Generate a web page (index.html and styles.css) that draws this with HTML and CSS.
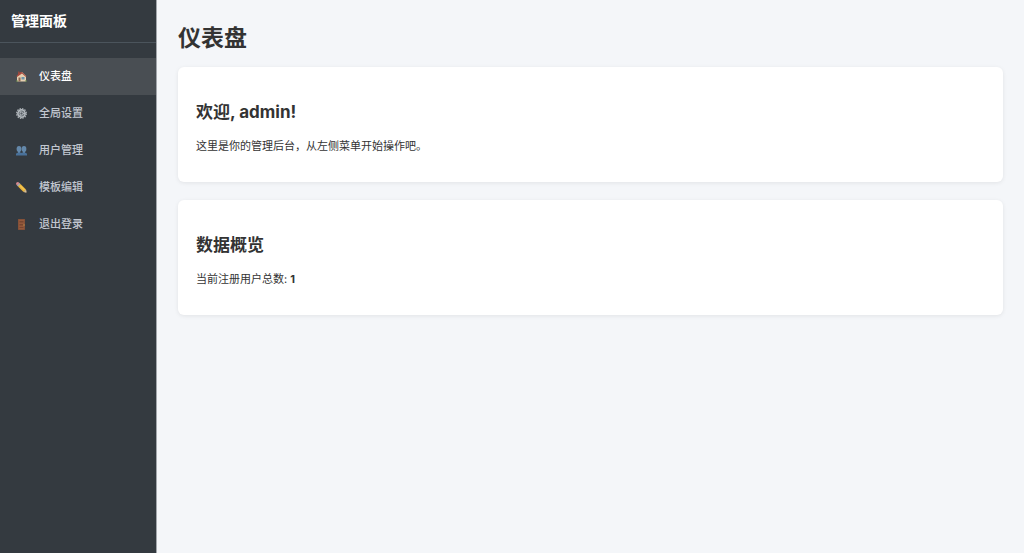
FILE: index.html
```html
<!DOCTYPE html>
<html lang="zh-CN">
<head>
    <meta charset="UTF-8">
    <meta name="viewport" content="width=device-width, initial-scale=1.0">
    <title>管理面板</title>
    <link rel="stylesheet" href="styles.css">
</head>
<body>

    <!-- 侧边栏 -->
    <aside class="sidebar">
        <div class="sidebar-header">管理面板</div>
        <nav>
            <ul class="menu">
                <li>
                    <a href="#" class="active">
                        <svg class="icon" viewBox="0 0 22 22" aria-hidden="true">
                            <path d="M4 1h3v7H4z" fill="#94493e"/>
                            <path d="M2 10l10-8 8 8v11H2z" fill="#e6cfb0"/>
                            <path d="M1 10L7 3l5-1 9 9-1 1-8-7-10 7z" fill="#a8483d"/>
                            <path d="M5 13h4v8H5z" fill="#8b6650"/>
                            <path d="M11 12h6v5h-6z" fill="#6d95ac"/>
                            <path d="M0 19h4v2H0zM18 19h4v2h-4z" fill="#6d8a50"/>
                        </svg>
                        仪表盘
                    </a>
                </li>
                <li>
                    <a href="#">
                        <svg class="icon" viewBox="0 0 22 22" aria-hidden="true">
                            <circle cx="11" cy="11" r="9.6" fill="none" stroke="#a4aaaf" stroke-width="2.8" stroke-dasharray="3 2"/>
                            <circle cx="11" cy="11" r="7.3" fill="#6d747a" stroke="#b4babf" stroke-width="3"/>
                            <path d="M11 11h7M11 11L7 5M11 11L7 17" stroke="#b4babf" stroke-width="1.8"/>
                            <circle cx="11" cy="11" r="3" fill="#555c63" stroke="#b4babf" stroke-width="1.8"/>
                        </svg>
                        全局设置
                    </a>
                </li>
                <li>
                    <a href="#">
                        <svg class="icon" viewBox="0 0 22 22" aria-hidden="true">
                            <g fill="#6488aa">
                                <ellipse cx="6" cy="8" rx="4.8" ry="6"/>
                                <ellipse cx="16" cy="8" rx="4.8" ry="6"/>
                                <path d="M4 11h4v5H4zM14 11h4v5h-4z"/>
                            </g>
                            <path d="M0 21v-3c1-2 3-3 6-3s4 0 5 1c1-1 2-1 5-1s5 1 6 3v3z" fill="#49719a"/>
                        </svg>
                        用户管理
                    </a>
                </li>
                <li>
                    <a href="#">
                        <svg class="icon" viewBox="0 0 22 22" aria-hidden="true">
                            <path d="M0 4l1-3 3-1 3 2-5 5z" fill="#dc8a90"/>
                            <path d="M2 7l5-5 2 2-5 5z" fill="#b5babd"/>
                            <path d="M4 9l5-5 11 11-5 5z" fill="#e9b43c"/>
                            <path d="M8 7l10 10" stroke="#fbd262" stroke-width="2"/>
                            <path d="M15 20l5-5 2 7z" fill="#d9bd95"/>
                            <path d="M20 21l1-2 1 3z" fill="#333"/>
                        </svg>
                        模板编辑
                    </a>
                </li>
                <li>
                    <a href="#">
                        <svg class="icon" viewBox="0 0 22 22" aria-hidden="true">
                            <path d="M4 0h14v22H4z" fill="#754b38"/>
                            <path d="M5 1h12v20H5z" fill="#94583b"/>
                            <path d="M7 4h8v3H7zM7 10h8v3H7zM7 16h8v2H7z" fill="#774630"/>
                            <circle cx="16" cy="12" r="1.3" fill="#c39a50"/>
                        </svg>
                        退出登录
                    </a>
                </li>
            </ul>
        </nav>
    </aside>

    <!-- 主内容 -->
    <main class="content">
        <h1>仪表盘</h1>
        <section class="card">
            <h2>欢迎, admin!</h2>
            <p>这里是你的管理后台，从左侧菜单开始操作吧。</p>
        </section>
        <section class="card">
            <h2>数据概览</h2>
            <p>当前注册用户总数: <strong>1</strong></p>
        </section>
    </main>

</body>
</html>
```
FILE: styles.css
```css
* {
    box-sizing: border-box;
}
body {
    margin: 0;
    display: flex;
    min-height: 100vh;
    font-family: Inter, "Noto Sans CJK SC", sans-serif;
    font-size: 11px;
    color: #333;
    background-color: #f4f6f9;
}

/* 侧边栏 */
.sidebar {
    flex: 0 0 157px;
    background-color: #343a40;
    border-right: 1px solid #a3a7ac;
}
.sidebar-header {
    padding: 11px;
    font-size: 14px;
    line-height: 20px;
    font-weight: bold;
    color: #fff;
    border-bottom: 1px solid #4b545c;
}
.menu {
    list-style: none;
    margin: 15px 0 0;
    padding: 0;
}
.menu a {
    display: flex;
    align-items: center;
    gap: 12px;
    padding: 10px 16px;
    line-height: 17px;
    font-weight: 500;
    color: #c2c7d0;
    text-decoration: none;
}
.menu a:hover,
.menu a.active {
    background-color: #494e53;
    color: #fff;
}
.icon {
    width: 11px;
    height: 11px;
}

/* 主内容 */
.content {
    flex: 1;
    padding: 22px 21px;
}
h1 {
    margin: 0 0 13px;
    font-size: 23px;
    line-height: 32px;
}
.card {
    margin-bottom: 18px;
    padding: 33px 18px 27px;
    background-color: #fff;
    border-radius: 6px;
    box-shadow: 0 1px 4px rgba(0, 0, 0, 0.08);
}
h2 {
    margin: 0 0 14px;
    font-size: 17px;
    line-height: 24px;
}
.card p {
    margin: 0;
    line-height: 17px;
}
```
